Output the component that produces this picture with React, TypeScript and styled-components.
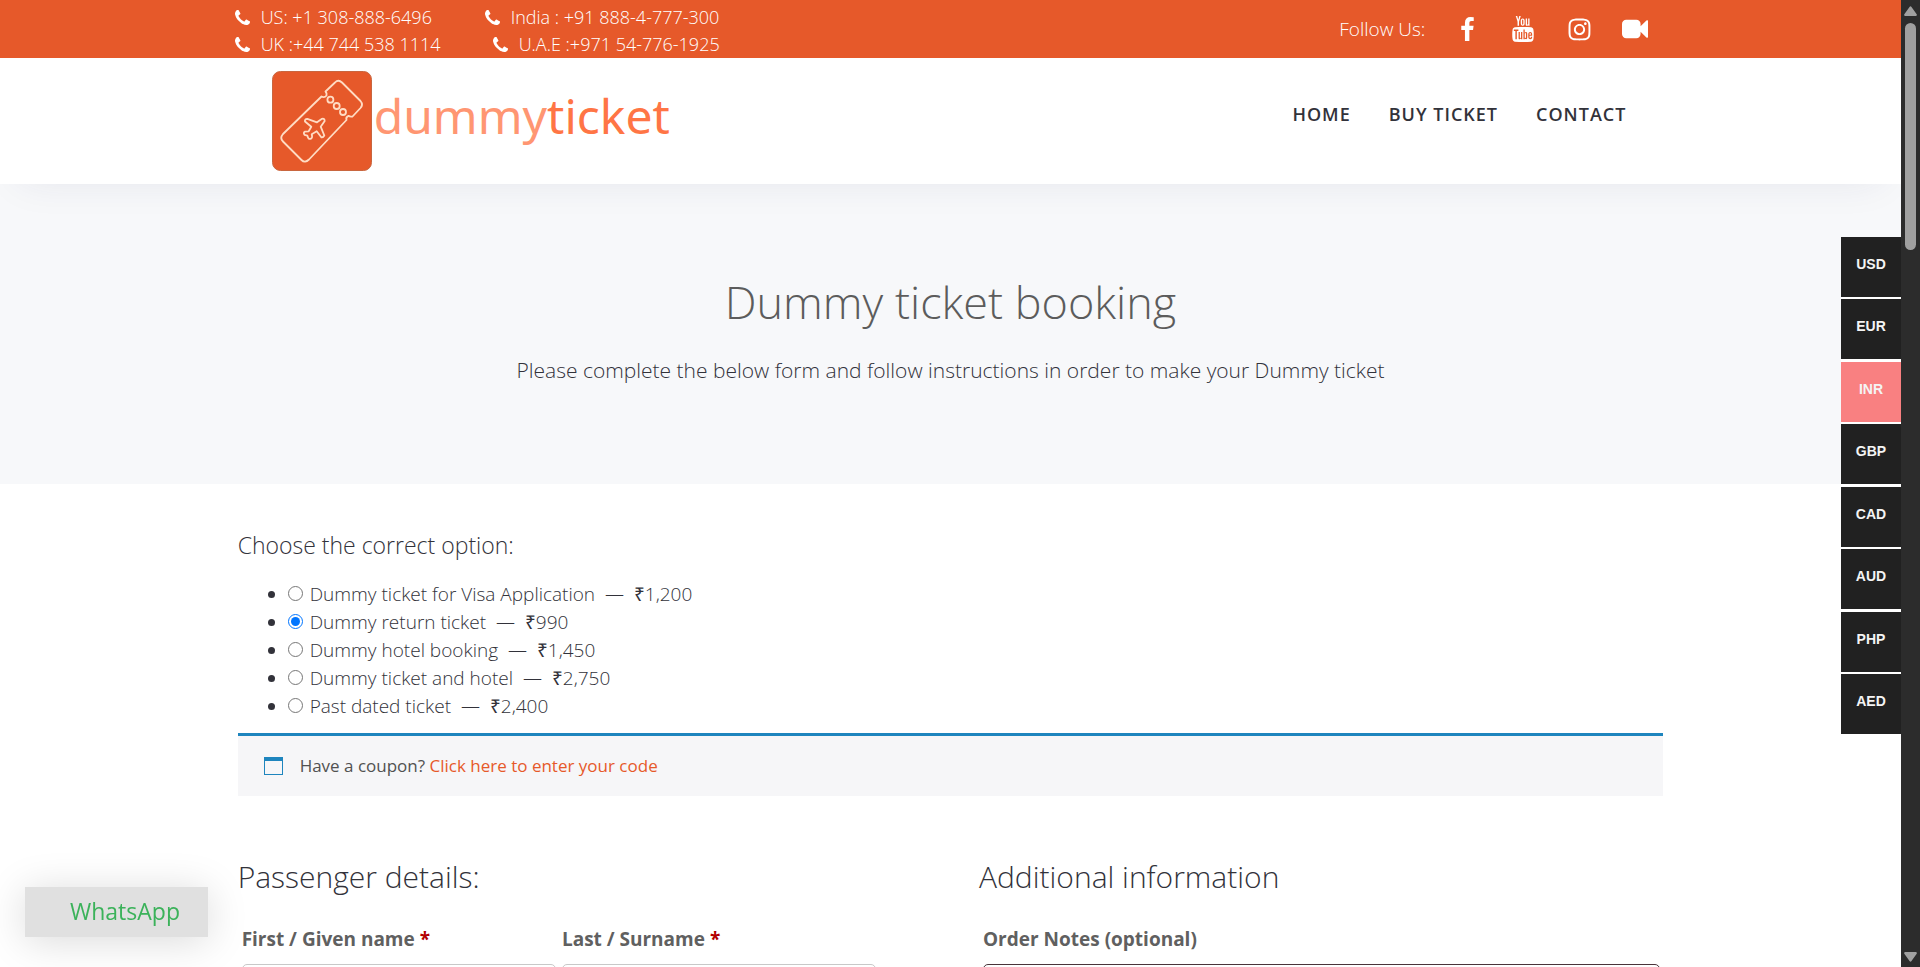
import React, { useState } from 'react';
import styled, { createGlobalStyle } from 'styled-components';
import { TfiYoutube } from 'react-icons/tfi';
import { FaInstagram } from 'react-icons/fa';

const orange = '#e6592a';

const GlobalStyle = createGlobalStyle`
  *, *::before, *::after { box-sizing: border-box; }
  body { margin: 0; overflow: hidden; background: #fff; color: #32323a; font-family: "Open Sans", sans-serif; font-weight: 300; }
  h1, h2, h3, p, ul { margin: 0; padding: 0; font-weight: 300; }
  a { color: inherit; text-decoration: none; }
`;

const Shell = styled.div`
  display: flex;
  height: 100vh;
`;

const Page = styled.div`
  flex: 1;
  min-width: 0;
  overflow: hidden;
`;

const Container = styled.div`
  width: 75%;
  margin: 0 auto;
`;

const TopBar = styled.div`
  background: ${orange};
  color: #fff;
  padding-top: 4px;
`;

const TopBarInner = styled(Container)`
  display: flex;
  justify-content: space-between;
`;

const Phones = styled.div`
  display: grid;
  grid-template-columns: 250px auto;
  margin-left: -3px;
`;

const Phone = styled.a<{ $indent?: boolean }>`
  display: flex;
  align-items: center;
  gap: 11px;
  padding-left: ${(p) => (p.$indent ? 8 : 0)}px;
  font-size: 18px;
  line-height: 27px;
  white-space: nowrap;
`;

const Social = styled.div`
  display: flex;
  align-items: center;
  font-size: 19px;
  line-height: 28px;
  padding-bottom: 4px;
`;

const SocialLabel = styled.span`
  margin-right: 14px;
`;

const SocialLink = styled.a`
  display: flex;
  justify-content: center;
  width: 56px;
`;

const Header = styled.header`
  position: relative;
  background: #fff;
  box-shadow: 0 15px 40px -20px rgba(40, 44, 90, 0.1);
`;

const HeaderInner = styled(Container)`
  display: flex;
  justify-content: space-between;
  padding: 13px 18px 13px 34px;
`;

const Logo = styled.a`
  display: flex;
  align-items: center;
  gap: 2px;
  font-family: "Noto Sans", sans-serif;
  font-size: 48px;
  line-height: 90px;
  font-weight: 400;
  color: #ff9672;
`;

const LogoStrong = styled.span`
  color: #ff7545;
`;

const LogoText = styled.span`
  align-self: flex-start;
`;

const Nav = styled.nav`
  display: flex;
  align-items: flex-start;
`;

const NavLink = styled.a`
  padding: 29px 19px 0;
  font-size: 18px;
  line-height: 28px;
  font-weight: 600;
  letter-spacing: 1px;
  color: #32323a;
`;

const Hero = styled.section`
  background: #f7f8fa;
  text-align: center;
  padding: 88px 20px 98px;
`;

const HeroTitle = styled.h1`
  font-size: 45px;
  line-height: 60px;
  color: #5c5c5c;
`;

const HeroText = styled.p`
  margin-top: 22px;
  font-size: 21px;
  line-height: 32px;
`;

const Main = styled(Container).attrs({ as: 'main' })`
  padding-top: 45px;
`;

const OptionsTitle = styled.h3`
  font-size: 23px;
  line-height: 32px;
`;

const Options = styled.ul`
  margin-top: 19px;
  padding-left: 50px;
`;

const Option = styled.li`
  font-size: 19px;
  line-height: 28px;
`;

const Radio = styled.input`
  width: 15px;
  height: 15px;
  margin: 0 7px 1px 0;
`;

const Rupee = styled.span`
  font-weight: 500;
`;

const Coupon = styled.div`
  display: flex;
  align-items: center;
  gap: 17px;
  margin-top: 13px;
  padding: 16px 26px;
  background: #f6f6f8;
  border-top: 3px solid #1e85be;
  font-size: 17px;
  line-height: 28px;
  font-weight: 400;
  color: #515151;
`;

const CouponIcon = styled.span`
  width: 19px;
  height: 18px;
  border: 1px solid #1e85be;
  border-top-width: 4px;
`;

const CouponLink = styled.a`
  color: ${orange};
`;

const Columns = styled.form`
  display: grid;
  grid-template-columns: 45fr 48fr;
  column-gap: 7%;
  margin-top: 61px;
`;

const SectionTitle = styled.h2`
  font-size: 30px;
  line-height: 40px;
  margin-bottom: 28px;
`;

const Fields = styled.div`
  display: flex;
  gap: 6px;
  padding: 0 3px 0 4px;
`;

const Field = styled.div`
  flex: 1;
  min-width: 0;
`;

const Label = styled.label`
  display: block;
  margin-bottom: 11px;
  font-size: 19px;
  line-height: 28px;
  font-weight: 700;
  color: #606060;
`;

const Required = styled.span`
  color: #b20000;
`;

const TextInput = styled.input`
  display: block;
  width: 100%;
  height: 50px;
  border: 1px solid #c8c8c8;
  border-radius: 5px;
`;

const TextArea = styled.textarea`
  display: block;
  width: 100%;
  height: 100px;
  border: 1px solid #4a343a;
  border-radius: 5px;
  resize: none;
`;

const Currencies = styled.div`
  position: fixed;
  top: 237px;
  right: 19px;
  display: flex;
  flex-direction: column;
  justify-content: space-between;
  width: 60px;
  height: 497px;
  background: #fff;
`;

const Currency = styled.button<{ $active: boolean }>`
  height: 60px;
  padding: 0 0 6px;
  border: 0;
  background: ${(p) => (p.$active ? '#f98081' : '#212121')};
  color: #f4f4f4;
  font: 700 14px "Liberation Sans", sans-serif;
`;

const WhatsApp = styled.a`
  position: fixed;
  left: 25px;
  bottom: 30px;
  width: 183px;
  padding: 8px 0 10px 45px;
  background: #e0e0e0;
  box-shadow: 0 4px 40px rgba(0, 0, 0, 0.15);
  color: #3bb25a;
  font-size: 23px;
  line-height: 32px;
  font-weight: 400;
`;

const ScrollTrack = styled.div`
  display: flex;
  flex-direction: column;
  align-items: center;
  justify-content: space-between;
  width: 19px;
  padding: 6px 0 5px;
  background: #2c2c2c;
`;

const ScrollTop = styled.div`
  display: flex;
  flex-direction: column;
  align-items: center;
  gap: 7px;
`;

const ScrollThumb = styled.div`
  width: 11px;
  height: 227px;
  border-radius: 6px;
  background: #a0a0a0;
`;

const PhoneIcon = () => (
  <svg width="15" height="15" viewBox="0 128 1408 1408" fill="#fff" aria-hidden="true">
    <path d="M1408 1240q0 27-10 70.5t-21 68.5q-21 50-122 106-94 51-186 51-27 0-53-3.5t-57.5-12.5-47-14.5-55.5-20.5-49-18q-98-35-175-83-127-79-264-216t-216-264q-48-77-83-175-3-9-18-49t-20.5-55.5-14.5-47-12.5-57.5-3.5-53q0-92 51-186 56-101 106-122 25-11 68.5-21t70.5-10q14 0 21 3 18 6 53 76 11 19 30 54t35 63.5 31 53.5q3 4 17.5 25t21.5 35.5 7 28.5q0 20-28.5 50t-62 55-62 53-28.5 46q0 9 5 22.5t8.5 20.5 14 24 11.5 19q76 137 174 235t235 174q2 1 19 11.5t24 14 20.5 8.5 22.5 5q18 0 46-28.5t53-62 55-62 50-28.5q14 0 28.5 7t35.5 21.5 25 17.5q25 15 53.5 31t63.5 35 54 30q70 35 76 53 3 7 3 21z" />
  </svg>
);

const FacebookIcon = () => (
  <svg width="13" height="24" viewBox="479 0 864 1664" fill="#fff" aria-hidden="true">
    <path d="M1343 12v264h-157q-86 0-116 36t-30 108v189h293l-39 296h-254v759h-306v-759h-255v-296h255v-218q0-186 104-288.5t277-102.5q147 0 228 12z" />
  </svg>
);

const VideoIcon = () => (
  <svg width="26" height="20" viewBox="0 256 1792 1280" fill="#fff" aria-hidden="true">
    <path d="M1792 352v1088q0 42-39 59-13 5-25 5-27 0-45-19l-403-403v166q0 119-84.5 203.5t-203.5 84.5h-704q-119 0-203.5-84.5t-84.5-203.5v-704q0-119 84.5-203.5t203.5-84.5h704q119 0 203.5 84.5t84.5 203.5v165l403-402q18-19 45-19 12 0 25 5 39 17 39 59z" />
  </svg>
);

const TicketLogo = () => (
  <svg width="100" height="100" viewBox="0 0 100 100" fill="none" stroke="#ffdcc4" strokeWidth="1.8" strokeLinejoin="round" aria-hidden="true">
    <rect x="0.5" y="0.5" width="99" height="99" rx="8" fill={orange} stroke="#c9663f" strokeWidth="1" />
    <path d="M63 11.5Q66.3 8 70 11.5L88.5 30Q91.5 33.5 88.5 37L80.5 45.5Q78 46 76.5 44.8Q73.5 46 74.5 49L37 88.5Q33 92.5 29.5 89L11 70.5Q7.5 67 11 63L49.5 25.5Q52.5 27 54.5 24.5Q55 22 53.5 20.5Z" />
    <circle cx="58.4" cy="28.7" r="3" />
    <circle cx="64.7" cy="35" r="3" />
    <circle cx="71" cy="41" r="3" />
    <path d="M45 51.3L50 47.8Q52.5 47 52.7 50L48.7 55.7L52.3 64.5Q51 67 49.3 66.3L44.7 60.3L39.7 63.2Q40.8 66.5 39 67.7Q36.8 68.6 36 66.5L35.3 64.7L32.500 63.800Q31 61.500 33 60.700L36.7 60.3L39.3 55.7L33 50.500Q32.500 48 35.3 47.8Z" />
  </svg>
);

const ArrowIcon = ({ down }: { down?: boolean }) => (
  <svg width="13" height="10" viewBox="0 0 13 10" fill="#a0a0a0" aria-hidden="true">
    <path d={down ? 'M1 0H12Q13.5 0.5 12.5 2L7.5 9Q6.5 10.5 5.5 9L0.5 2Q-0.5 0.5 1 0Z' : 'M1 10H12Q13.5 9.5 12.5 8L7.5 1Q6.5 -0.5 5.5 1L0.5 8Q-0.5 9.5 1 10Z'} />
  </svg>
);

const options = [
  { name: 'Dummy ticket for Visa Application', price: '1,200' },
  { name: 'Dummy return ticket', price: '990' },
  { name: 'Dummy hotel booking', price: '1,450' },
  { name: 'Dummy ticket and hotel', price: '2,750' },
  { name: 'Past dated ticket', price: '2,400' },
];

const currencies = ['USD', 'EUR', 'INR', 'GBP', 'CAD', 'AUD', 'PHP', 'AED'];

export default function App() {
  const [selected, setSelected] = useState(1);
  const [currency, setCurrency] = useState('INR');

  return (
    <>
      <GlobalStyle />
      <Shell>
        <Page>
          <TopBar>
            <TopBarInner>
              <Phones>
                <Phone href="tel:+13088886496"><PhoneIcon />US: +1 308-888-6496</Phone>
                <Phone href="tel:+918884777300"><PhoneIcon />India : +91 888-4-777-300</Phone>
                <Phone href="tel:+447445381114"><PhoneIcon />UK :+44 744 538 1114</Phone>
                <Phone $indent href="tel:+971547761925"><PhoneIcon />U.A.E :+971 54-776-1925</Phone>
              </Phones>
              <Social>
                <SocialLabel>Follow Us:</SocialLabel>
                <SocialLink href="#facebook" aria-label="Facebook"><FacebookIcon /></SocialLink>
                <SocialLink href="#youtube" aria-label="YouTube"><TfiYoutube size={26} /></SocialLink>
                <SocialLink href="#instagram" aria-label="Instagram"><FaInstagram size={25} /></SocialLink>
                <SocialLink href="#video" aria-label="Video"><VideoIcon /></SocialLink>
              </Social>
            </TopBarInner>
          </TopBar>

          <Header>
            <HeaderInner>
              <Logo href="#home">
                <TicketLogo />
                <LogoText>dummy<LogoStrong>ticket</LogoStrong></LogoText>
              </Logo>
              <Nav>
                <NavLink href="#home">HOME</NavLink>
                <NavLink href="#buy">BUY TICKET</NavLink>
                <NavLink href="#contact">CONTACT</NavLink>
              </Nav>
            </HeaderInner>
          </Header>

          <Hero>
            <HeroTitle>Dummy ticket booking</HeroTitle>
            <HeroText>Please complete the below form and follow instructions in order to make your Dummy ticket</HeroText>
          </Hero>

          <Main>
            <OptionsTitle>Choose the correct option:</OptionsTitle>
            <Options>
              {options.map((option, i) => (
                <Option key={option.name}>
                  <Radio
                    type="radio"
                    name="ticket"
                    id={`ticket-${i}`}
                    checked={selected === i}
                    onChange={() => setSelected(i)}
                  />
                  <label htmlFor={`ticket-${i}`}>
                    {option.name}&nbsp; — &nbsp;<Rupee>₹</Rupee>{option.price}
                  </label>
                </Option>
              ))}
            </Options>

            <Coupon>
              <CouponIcon />
              <span>Have a coupon? <CouponLink href="#coupon">Click here to enter your code</CouponLink></span>
            </Coupon>

            <Columns>
              <div>
                <SectionTitle>Passenger details:</SectionTitle>
                <Fields>
                  <Field>
                    <Label htmlFor="first-name">First / Given name <Required>*</Required></Label>
                    <TextInput id="first-name" type="text" />
                  </Field>
                  <Field>
                    <Label htmlFor="last-name">Last / Surname <Required>*</Required></Label>
                    <TextInput id="last-name" type="text" />
                  </Field>
                </Fields>
              </div>
              <div>
                <SectionTitle>Additional information</SectionTitle>
                <Fields>
                  <Field>
                    <Label htmlFor="notes">Order Notes (optional)</Label>
                    <TextArea id="notes" />
                  </Field>
                </Fields>
              </div>
            </Columns>
          </Main>
        </Page>

        <ScrollTrack>
          <ScrollTop>
            <ArrowIcon />
            <ScrollThumb />
          </ScrollTop>
          <ArrowIcon down />
        </ScrollTrack>
      </Shell>

      <Currencies>
        {currencies.map((code) => (
          <Currency key={code} type="button" $active={code === currency} onClick={() => setCurrency(code)}>
            {code}
          </Currency>
        ))}
      </Currencies>

      <WhatsApp href="#whatsapp">WhatsApp</WhatsApp>
    </>
  );
}
